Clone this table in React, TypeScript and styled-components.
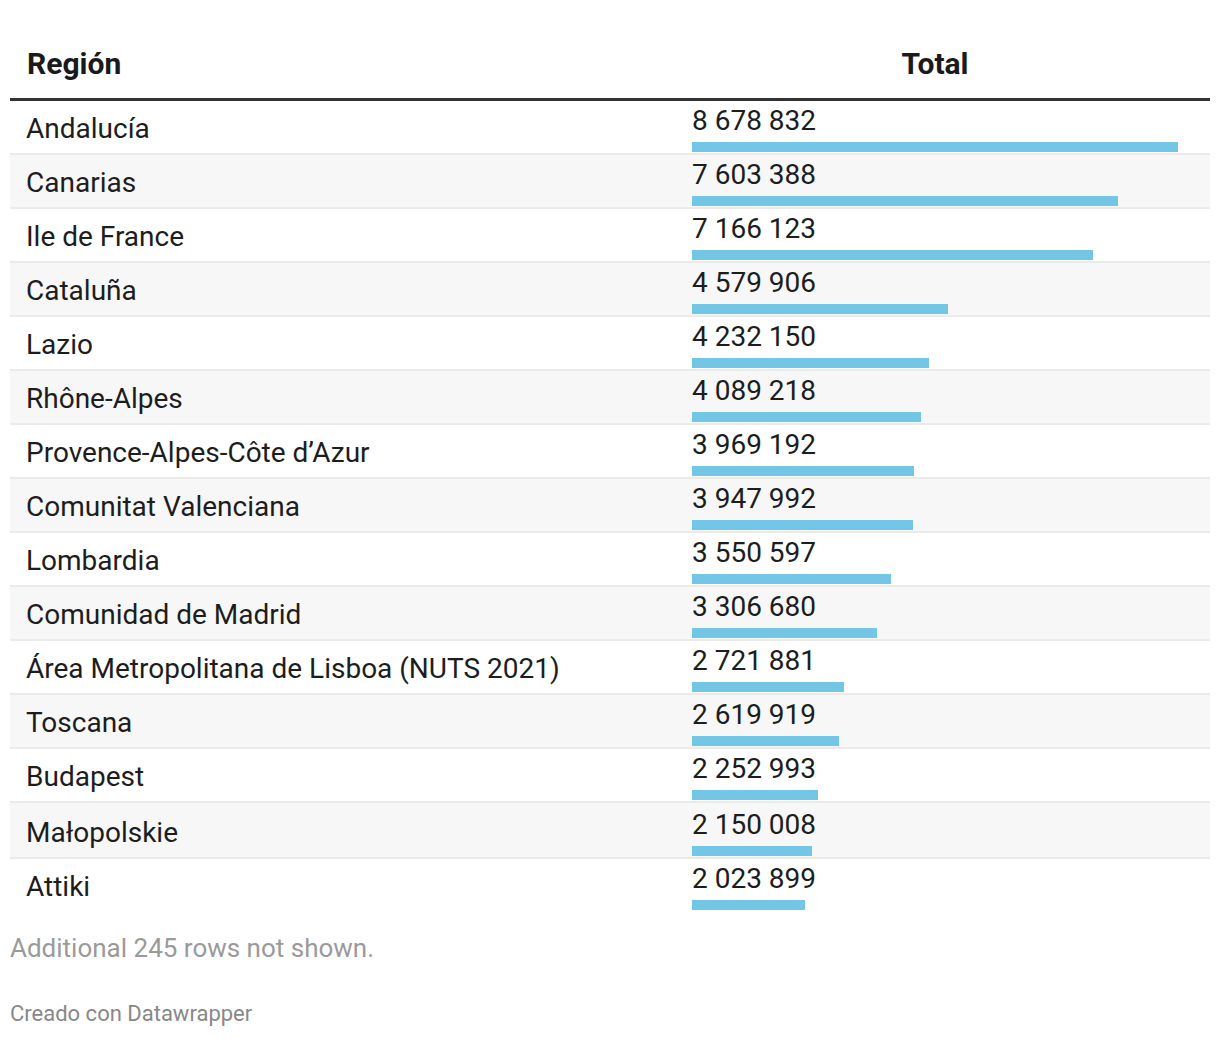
import React from 'react';
import styled, { createGlobalStyle } from 'styled-components';

const GlobalStyle = createGlobalStyle`
  body {
    margin: 0;
    background: #ffffff;
    font-family: Roboto, 'Liberation Sans', sans-serif;
    color: #1d1d1d;
  }
`;

const MAX_VALUE = 8678832;

const rows: { region: string; total: number; tall?: boolean }[] = [
  { region: 'Andalucía', total: 8678832 },
  { region: 'Canarias', total: 7603388 },
  { region: 'Ile de France', total: 7166123 },
  { region: 'Cataluña', total: 4579906 },
  { region: 'Lazio', total: 4232150 },
  { region: 'Rhône-Alpes', total: 4089218 },
  { region: 'Provence-Alpes-Côte d’Azur', total: 3969192 },
  { region: 'Comunitat Valenciana', total: 3947992 },
  { region: 'Lombardia', total: 3550597 },
  { region: 'Comunidad de Madrid', total: 3306680 },
  { region: 'Área Metropolitana de Lisboa (NUTS 2021)', total: 2721881 },
  { region: 'Toscana', total: 2619919 },
  { region: 'Budapest', total: 2252993 },
  { region: 'Małopolskie', total: 2150008, tall: true },
  { region: 'Attiki', total: 2023899 },
];

const formatNumber = (n: number): string => n.toString().replace(/\B(?=(\d{3})+(?!\d))/g, ' ');

const Wrapper = styled.div`
  padding: 0 10px;
`;

const Table = styled.div`
  display: flex;
  flex-direction: column;
`;

const HeaderRow = styled.div`
  display: grid;
  grid-template-columns: 666px 1fr;
  border-bottom: 3px solid #333333;
`;

const HeaderCell = styled.div<{ $center?: boolean }>`
  font-size: 30px;
  line-height: 32px;
  font-weight: 700;
  color: #1a1a1a;
  padding: 48px ${({ $center }) => ($center ? '32px' : '0')} 18px ${({ $center }) => ($center ? '16px' : '17px')};
  text-align: ${({ $center }) => ($center ? 'center' : 'left')};
`;

const Row = styled.div<{ $striped: boolean; $last: boolean; $tall?: boolean }>`
  display: grid;
  grid-template-columns: 666px 1fr;
  background: ${({ $striped }) => ($striped ? '#f7f7f7' : '#ffffff')};
  border-bottom: ${({ $last }) => ($last ? 'none' : '2px solid #ebebeb')};
  padding-top: ${({ $tall }) => ($tall ? '2px' : '0')};
`;

const NameCell = styled.div`
  font-size: 28px;
  line-height: 32px;
  padding: 12px 0 8px 16px;
  white-space: nowrap;
`;

const ValueCell = styled.div`
  padding: 4px 32px 1px 16px;
`;

const Value = styled.div`
  font-size: 28px;
  line-height: 32px;
`;

const Bar = styled.div`
  height: 10px;
  margin-top: 5px;
  background: #73c6e6;
`;

const Note = styled.div`
  font-size: 26px;
  line-height: 30px;
  color: #9a9a9a;
  margin-top: 22px;
`;

const Credit = styled.div`
  font-size: 22px;
  line-height: 26px;
  color: #888888;
  margin-top: 38px;
`;

export default function App(): JSX.Element {
  return (
    <Wrapper>
      <GlobalStyle />
      <Table>
        <HeaderRow>
          <HeaderCell>Región</HeaderCell>
          <HeaderCell $center>Total</HeaderCell>
        </HeaderRow>
        {rows.map((row, i) => (
          <Row key={row.region} $striped={i % 2 === 1} $last={i === rows.length - 1} $tall={row.tall}>
            <NameCell>{row.region}</NameCell>
            <ValueCell>
              <Value>{formatNumber(row.total)}</Value>
              <Bar style={{ width: `${(row.total / MAX_VALUE) * 100}%` }} />
            </ValueCell>
          </Row>
        ))}
      </Table>
      <Note>Additional 245 rows not shown.</Note>
      <Credit>Creado con Datawrapper</Credit>
    </Wrapper>
  );
}
